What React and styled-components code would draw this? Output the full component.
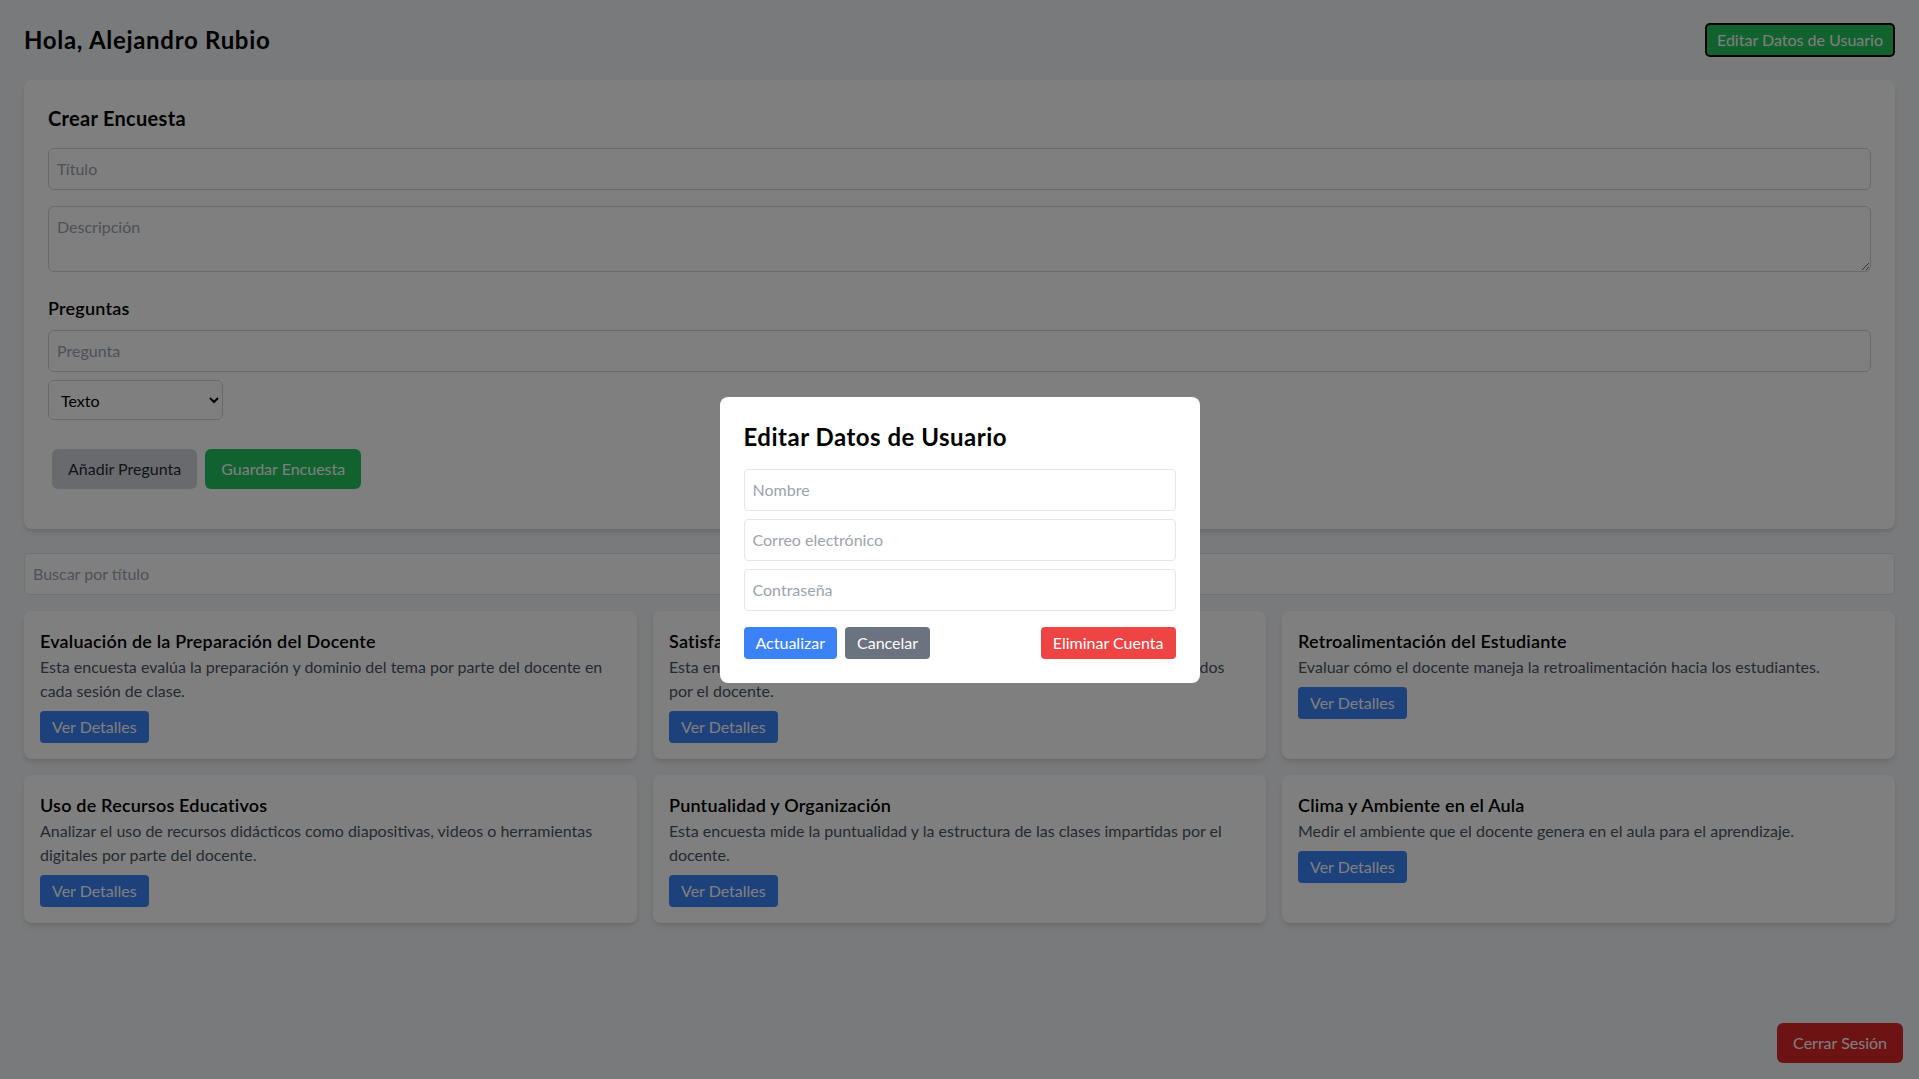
import React from 'react';
import styled, { createGlobalStyle } from 'styled-components';

const GlobalStyle = createGlobalStyle`
  * { box-sizing: border-box; }
  body {
    margin: 0;
    background: #f3f4f6;
    font-family: "Segoe UI", Lato, "Liberation Sans", sans-serif;
    color: #111827;
  }
  input::placeholder, textarea::placeholder { color: #9ca3af; opacity: 1; }
`;

const surveys = [
  {
    title: 'Evaluación de la Preparación del Docente',
    text: 'Esta encuesta evalúa la preparación y dominio del tema por parte del docente en cada sesión de clase.',
  },
  {
    title: 'Satisfacción con los Métodos de Enseñanza',
    text: 'Esta encuesta mide la satisfacción de los estudiantes con los métodos aplicados por el docente.',
  },
  {
    title: 'Retroalimentación del Estudiante',
    text: 'Evaluar cómo el docente maneja la retroalimentación hacia los estudiantes.',
  },
  {
    title: 'Uso de Recursos Educativos',
    text: 'Analizar el uso de recursos didácticos como diapositivas, videos o herramientas digitales por parte del docente.',
  },
  {
    title: 'Puntualidad y Organización',
    text: 'Esta encuesta mide la puntualidad y la estructura de las clases impartidas por el docente.',
  },
  {
    title: 'Clima y Ambiente en el Aula',
    text: 'Medir el ambiente que el docente genera en el aula para el aprendizaje.',
  },
];

function App() {
  return (
    <>
      <GlobalStyle />
      <Page>
        <Header>
          <Greeting>Hola, Alejandro Rubio</Greeting>
          <EditUserButton>Editar Datos de Usuario</EditUserButton>
        </Header>

        <Panel>
          <PanelTitle>Crear Encuesta</PanelTitle>
          <Field placeholder="Título" />
          <TextArea placeholder="Descripción" rows={2} />
          <SectionTitle>Preguntas</SectionTitle>
          <Field placeholder="Pregunta" $gap={8} />
          <Select defaultValue="texto">
            <option value="texto">Texto</option>
            <option value="opcion">Opción múltiple</option>
          </Select>
          <ButtonRow>
            <ActionButton $variant="gray">Añadir Pregunta</ActionButton>
            <ActionButton $variant="green">Guardar Encuesta</ActionButton>
          </ButtonRow>
        </Panel>

        <Search placeholder="Buscar por título" />

        <Grid>
          {surveys.map((s) => (
            <SurveyCard key={s.title}>
              <SurveyTitle>{s.title}</SurveyTitle>
              <SurveyText>{s.text}</SurveyText>
              <DetailsButton>Ver Detalles</DetailsButton>
            </SurveyCard>
          ))}
        </Grid>
      </Page>

      <LogoutButton>Cerrar Sesión</LogoutButton>

      <Overlay>
        <Modal>
          <ModalTitle>Editar Datos de Usuario</ModalTitle>
          <ModalField placeholder="Nombre" />
          <ModalField placeholder="Correo electrónico" />
          <ModalField placeholder="Contraseña" type="password" />
          <ModalActions>
            <SmallButton $color="#3b82f6">Actualizar</SmallButton>
            <SmallButton $color="#6b7280">Cancelar</SmallButton>
            <SmallButton $color="#ef4444" $push>Eliminar Cuenta</SmallButton>
          </ModalActions>
        </Modal>
      </Overlay>
    </>
  );
}

/////////////////////////

const Page = styled.div`
  padding: 23px 24px 24px;
  min-height: 100vh;
`;

const Header = styled.header`
  display: flex;
  justify-content: space-between;
  align-items: center;
  height: 34px;
  margin-bottom: 23px;
`;

const Greeting = styled.h1`
  margin: 0;
  font-size: 24px;
  line-height: 32px;
  font-weight: 700;
  letter-spacing: 0.7px;
  color: #000;
`;

const EditUserButton = styled.button`
  font: inherit;
  font-size: 16px;
  line-height: 24px;
  padding: 3px 10px;
  border: 2px solid #000;
  border-radius: 5px;
  background: #22c55e;
  color: #fff;
`;

const Panel = styled.section`
  background: #fff;
  border-radius: 8px;
  box-shadow: 0 4px 6px -1px rgba(0, 0, 0, 0.1), 0 2px 4px -2px rgba(0, 0, 0, 0.1);
  padding: 24px;
  margin-bottom: 24px;
`;

const PanelTitle = styled.h2`
  margin: 0 0 16px;
  font-size: 20px;
  line-height: 28px;
  font-weight: 700;
  letter-spacing: 0.3px;
  color: #000;
`;

const Field = styled.input`
  display: block;
  width: 100%;
  font: inherit;
  font-size: 16px;
  line-height: 24px;
  padding: 8px;
  border: 1px solid #d1d5db;
  border-radius: 6px;
  background: transparent;
  margin-bottom: ${(p) => (p.$gap ?? 16)}px;
  outline: none;
`;

const TextArea = styled.textarea`
  display: block;
  width: 100%;
  font: inherit;
  font-size: 16px;
  line-height: 24px;
  padding: 8px;
  border: 1px solid #d1d5db;
  border-radius: 6px;
  margin-bottom: 22px;
  outline: none;
`;

const SectionTitle = styled.h3`
  margin: 0 0 8px;
  font-size: 18px;
  line-height: 28px;
  font-weight: 600;
  letter-spacing: 0.2px;
  color: #000;
`;

const Select = styled.select`
  display: block;
  width: 175px;
  height: 40px;
  font: inherit;
  font-size: 16px;
  padding: 0 8px;
  border: 1px solid #d1d5db;
  border-radius: 6px;
  background: #fff;
  color: #000;
`;

const ButtonRow = styled.div`
  display: flex;
  margin: 29px 0 16px;
`;

const ActionButton = styled.button`
  font: inherit;
  font-size: 16px;
  line-height: 24px;
  padding: 8px 16px;
  margin: 0 4px;
  border: none;
  border-radius: 6px;
  background: ${(p) => (p.$variant === 'green' ? '#22c55e' : '#d1d5db')};
  color: ${(p) => (p.$variant === 'green' ? '#fff' : '#1f2937')};
`;

const Search = styled.input`
  display: block;
  width: 100%;
  font: inherit;
  font-size: 16px;
  line-height: 24px;
  padding: 8px;
  border: 1px solid #e5e7eb;
  border-radius: 4px;
  background: #fff;
  margin-bottom: 16px;
  outline: none;
`;

const Grid = styled.div`
  display: grid;
  grid-template-columns: repeat(3, 1fr);
  gap: 16px;
`;

const SurveyCard = styled.article`
  background: #fff;
  border-radius: 8px;
  box-shadow: 0 4px 6px -1px rgba(0, 0, 0, 0.1), 0 2px 4px -2px rgba(0, 0, 0, 0.1);
  padding: 16px;
`;

const SurveyTitle = styled.h3`
  margin: 0;
  font-size: 18px;
  line-height: 28px;
  font-weight: 600;
  letter-spacing: 0.2px;
  color: #000;
`;

const SurveyText = styled.p`
  margin: 0;
  font-size: 16px;
  line-height: 24px;
  color: #4b5563;
`;

const DetailsButton = styled.button`
  margin-top: 8px;
  font: inherit;
  font-size: 16px;
  line-height: 24px;
  padding: 4px 12px;
  border: none;
  border-radius: 4px;
  background: #3b82f6;
  color: #fff;
`;

const LogoutButton = styled.button`
  position: fixed;
  right: 16px;
  bottom: 16px;
  font-family: inherit;
  font-size: 16px;
  line-height: 24px;
  padding: 8px 16px;
  border: none;
  border-radius: 6px;
  background: #dc2626;
  color: #fff;
`;

const Overlay = styled.div`
  position: fixed;
  inset: 0;
  z-index: 50;
  background: rgba(0, 0, 0, 0.5);
  display: flex;
  align-items: center;
  justify-content: center;
`;

const Modal = styled.div`
  width: 480px;
  background: #fff;
  border-radius: 8px;
  padding: 24px;
`;

const ModalTitle = styled.h2`
  margin: 0 0 16px;
  font-size: 24px;
  line-height: 32px;
  font-weight: 700;
  letter-spacing: 0.5px;
  color: #000;
`;

const ModalField = styled.input`
  display: block;
  width: 100%;
  font: inherit;
  font-size: 16px;
  line-height: 24px;
  padding: 8px;
  border: 1px solid #e5e7eb;
  border-radius: 4px;
  margin-bottom: 8px;
  outline: none;
`;

const ModalActions = styled.div`
  display: flex;
  gap: 8px;
  margin-top: 16px;
`;

const SmallButton = styled.button`
  font: inherit;
  font-size: 16px;
  line-height: 24px;
  padding: 4px 12px;
  border: none;
  border-radius: 4px;
  background: ${(p) => p.$color};
  color: #fff;
  margin-left: ${(p) => (p.$push ? 'auto' : '0')};
`;

export default App;
